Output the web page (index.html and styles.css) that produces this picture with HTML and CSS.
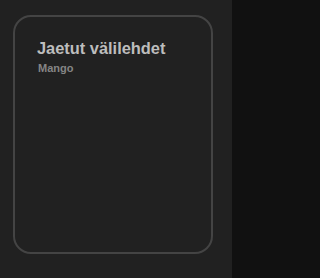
FILE: index.html
```html
<!DOCTYPE html>
<html>
<head>
<meta charset="utf-8">
<link rel="stylesheet" href="styles.css">
</head>
<body>
<div class="page">
  <section class="card">
    <h1 class="title">Jaetut välilehdet</h1>
    <div class="subtitle">Mango</div>
  </section>
</div>
</body>
</html>
```
FILE: styles.css
```css
html, body {
  margin: 0;
  padding: 0;
  background: #111111;
  height: 100%;
}
.page {
  box-sizing: border-box;
  width: 232px;
  height: 278px;
  padding: 15px 0 0 13px;
  background: #212121;
  font-family: "Liberation Sans", Arial, sans-serif;
}
.card {
  box-sizing: border-box;
  width: 200px;
  height: 239px;
  border: 2px solid #444444;
  border-radius: 18px;
  padding: 22px 20px 0 22px;
}
.title {
  margin: 0;
  font-size: 16.4px;
  font-weight: bold;
  color: #bdbdbd;
  line-height: 18px;
}
.subtitle {
  margin: 5px 0 0 1px;
  font-size: 11px;
  font-weight: bold;
  color: #858585;
  line-height: 13px;
}
```
